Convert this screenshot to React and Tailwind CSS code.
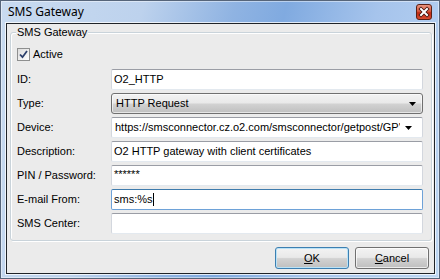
import React from "react";

const btnBg =
  "bg-[linear-gradient(to_bottom,#f3f3f3_0%,#e9e9e9_47%,#d2d2d2_53%,#bfbfbf_100%)]";

function Field({ label, children }) {
  return (
    <div className="flex items-center h-[21px]">
      <div className="w-[94px] shrink-0">{label}</div>
      {children}
    </div>
  );
}

const textBox =
  "flex-1 h-[21px] bg-white rounded-[2px] border border-t-[#9a9da5] border-l-[#d3d7de] border-r-[#d3d7de] border-b-[#e3e9ef] flex items-center pl-[2px] overflow-hidden whitespace-nowrap";

function Arrow() {
  return (
    <svg width="7" height="4" viewBox="0 0 7 4">
      <path d="M0 0H7L3.5 4Z" fill="#000" />
    </svg>
  );
}

function CloseButton() {
  return (
    <svg width="16" height="16" viewBox="0 0 16 16">
      <defs>
        <linearGradient id="cg" x1="0" y1="0" x2="0" y2="1">
          <stop offset="0" stopColor="#eb9a85" />
          <stop offset="0.45" stopColor="#d85a3f" />
          <stop offset="0.55" stopColor="#c02a12" />
          <stop offset="1" stopColor="#da4f33" />
        </linearGradient>
      </defs>
      <rect x="0.5" y="0.5" width="15" height="15" rx="2.5" fill="url(#cg)" stroke="#5a1f14" />
      <path
        d="M5 5L11 11M11 5L5 11"
        stroke="#3a0e08"
        strokeWidth="3.6"
        strokeLinecap="square"
      />
      <path
        d="M5 5L11 11M11 5L5 11"
        stroke="#fff"
        strokeWidth="2"
        strokeLinecap="square"
      />
    </svg>
  );
}

export default function App() {
  return (
    <div className="w-[440px] h-[279px] font-['Liberation_Sans',Arial,sans-serif] text-[11px] text-black">
      <div className="w-[440px] h-[279px] border border-[#56657a] bg-[linear-gradient(105deg,#c9dbf0_0%,#bdd2ed_28%,#8fb3e2_46%,#80aae0_56%,#a6c4ec_74%,#bcd6f3_100%)] shadow-[inset_0_0_0_1px_rgba(255,255,255,0.45)] flex flex-col">
        {/* title bar */}
        <div className="h-[22px] shrink-0 flex items-center justify-between pl-[7px] pr-[7px]">
          <span className="font-['Noto_Sans',sans-serif] text-[12px] leading-[16px] text-black">
            SMS Gateway
          </span>
          <div className="mt-[-1px]">
            <CloseButton />
          </div>
        </div>
        {/* client */}
        <div className="ml-[5px] mr-[4px] h-[251px] border border-[#1f2328] bg-[#ebebeb] shadow-[0_0_0_1px_rgba(255,255,255,0.75)] flex flex-col pt-[8px] pl-[3px] pr-[2px]">
          {/* group box */}
          <div className="relative h-[209px] border border-[#c9d3da] rounded-[3px] shadow-[inset_1px_1px_0_#fff,1px_1px_0_#fff] pt-[15px] pl-[6px] pr-[8px]">
            <span className="absolute top-[-7px] left-[5px] px-[1px] leading-[13px] bg-[#ebebeb]">
              SMS Gateway
            </span>
            <div className="flex items-center h-[13px]">
              <div className="w-[13px] h-[13px] border border-[#8e8f8f] bg-[linear-gradient(135deg,#dcdcdc,#fefefe)] flex items-center justify-center">
                <svg width="9" height="9" viewBox="0 0 9 9">
                  <path
                    d="M1 4.5L3.5 7.2L8 1"
                    stroke="#2b3f6b"
                    strokeWidth="1.8"
                    fill="none"
                  />
                </svg>
              </div>
              <span className="ml-[3px] leading-[13px]">Active</span>
            </div>
            <div className="mt-[8px] flex flex-col gap-[3px]">
              <Field label="ID:">
                <div className={textBox}>O2_HTTP</div>
              </Field>
              <Field label="Type:">
                <div
                  className={`flex-1 h-[21px] rounded-[3px] border border-[#707070] ${btnBg} shadow-[inset_0_0_0_1px_rgba(255,255,255,0.6)] flex items-center pl-[4px] pr-[6px]`}
                >
                  <span className="flex-1">HTTP Request</span>
                  <Arrow />
                </div>
              </Field>
              <Field label="Device:">
                <div className={textBox + " pr-[5px]"}>
                  <span className="flex-1 overflow-hidden whitespace-nowrap pl-[1px]">
                    https://smsconnector.cz.o2.com/smsconnector/getpost/GP'
                  </span>
                  <div className="w-[17px] shrink-0 flex justify-center">
                    <Arrow />
                  </div>
                </div>
              </Field>
              <Field label="Description:">
                <div className={textBox}>O2 HTTP gateway with client certificates</div>
              </Field>
              <Field label="PIN / Password:">
                <div className={textBox}>
                  <span className="mt-[-3px]">******</span>
                </div>
              </Field>
              <Field label="E-mail From:">
                <div className="flex-1 h-[21px] bg-white rounded-[2px] border border-[#6ea2d8] border-t-[#3d7bad] flex items-center pl-[2px]">
                  <span>sms:%s</span>
                  <span className="w-[1px] h-[13px] bg-black" />
                </div>
              </Field>
              <Field label="SMS Center:">
                <div className={textBox}></div>
              </Field>
            </div>
          </div>
          {/* buttons */}
          <div className="mt-[6px] flex justify-end gap-[6px] pr-[3px]">
            <button
              className={`w-[74px] h-[22px] rounded-[3px] border border-[#3c7fb1] ${btnBg} shadow-[inset_0_0_0_1px_#b9e2f7] flex items-center justify-center text-[11px] leading-none`}
            >
              <span>
                <u>O</u>K
              </span>
            </button>
            <button
              className={`w-[74px] h-[22px] rounded-[3px] border border-[#707070] ${btnBg} shadow-[inset_0_0_0_1px_rgba(255,255,255,0.7)] flex items-center justify-center text-[11px] leading-none`}
            >
              <span>
                <u>C</u>ancel
              </span>
            </button>
          </div>
        </div>
      </div>
    </div>
  );
}
